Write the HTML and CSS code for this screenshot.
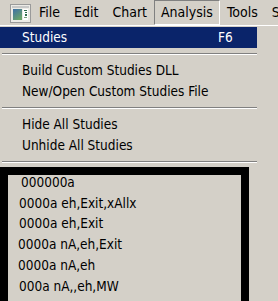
FILE: index.html
```html
<!DOCTYPE html>
<html lang="en">
<head>
    <meta charset="UTF-8">
    <title>Analysis menu</title>
    <link rel="stylesheet" href="styles.css">
</head>
<body>

    <div class="menubar">
        <span class="app-icon">
            <svg width="21" height="19" viewBox="0 0 21 19">
                <defs>
                    <linearGradient id="pane" x1="0" y1="0" x2="0.6" y2="1">
                        <stop offset="0" stop-color="#3d6fa8"/>
                        <stop offset="1" stop-color="#6aa46a"/>
                    </linearGradient>
                </defs>
                <rect x="0.5" y="0.5" width="20" height="18" fill="#ecebe6" stroke="#9a9a9a"/>
                <rect x="2" y="2" width="17" height="2" fill="#c8c8c8"/>
                <rect x="3" y="5" width="9" height="11" fill="url(#pane)"/>
                <rect x="13" y="5" width="5" height="11" fill="#ffffff"/>
                <rect x="14" y="6" width="3" height="1" fill="#2f6b4a"/>
                <rect x="15" y="8" width="2" height="1" fill="#2f6b4a"/>
                <rect x="15" y="10" width="2" height="2" fill="#2f6b4a"/>
                <rect x="14" y="13" width="3" height="1" fill="#7aa07a"/>
            </svg>
        </span>
        <span class="menu-item">File</span>
        <span class="menu-item">Edit</span>
        <span class="menu-item">Chart</span>
        <span class="menu-item pressed">Analysis</span>
        <span class="menu-item">Tools</span>
        <span class="menu-item">S</span>
    </div>

    <div class="dropdown">
        <div class="entry selected"><span>Studies</span><span class="key">F6</span></div>
        <div class="sep"></div>
        <div class="entry">Build Custom Studies DLL</div>
        <div class="entry">New/Open Custom Studies File</div>
        <div class="sep"></div>
        <div class="entry">Hide All Studies</div>
        <div class="entry">Unhide All Studies</div>
        <div class="sep"></div>
    </div>

    <div class="study-box">
        <div class="line l1">000000a</div>
        <div class="line">0000a eh,Exit,xAllx</div>
        <div class="line">0000a eh,Exit</div>
        <div class="line l4">0000a nA,eh,Exit</div>
        <div class="line l4">0000a nA,eh</div>
        <div class="line">000a nA,,eh,MW</div>
    </div>

</body>
</html>
```

FILE: styles.css
```css
* { margin: 0; padding: 0; box-sizing: border-box; }
body {
    background: #d4d0c8;
    font-family: "DejaVu Sans Condensed", "DejaVu Sans", sans-serif;
    font-stretch: condensed;
    font-size: 13.5px;
    color: #000;
    overflow: hidden;
}
.menubar {
    display: flex;
    align-items: center;
    height: 26px;
    padding-left: 10px;
    border-bottom: 1px solid #fff;
    white-space: nowrap;
    font-size: 14px;
}
.app-icon { display: flex; margin-right: 1px; margin-top: 1px; }
.menu-item {
    padding: 3px 6px 4px;
    border: 1px solid transparent;
    line-height: 16px;
}
.menu-item.pressed {
    border-color: #808080 #fff #fff #808080;
}
.dropdown {
    width: 257px;
    padding-top: 1px;
}
.entry {
    display: flex;
    justify-content: space-between;
    height: 21px;
    line-height: 21px;
    padding: 0 22px 0 22px;
}
.entry.selected { background: #0a246a; color: #fff; }
.key { width: 17px; }
.sep {
    margin: 5px 0 5px 2px;
    border-top: 1px solid #808080;
    border-bottom: 1px solid #fff;
}
.sep:last-child { margin-bottom: 4px; }
.study-box {
    width: 249px;
    height: 140px;
    border: 8px solid #000;
    border-bottom: none;
    padding: 0 0 0 11px;
}
.line { line-height: 20.7px; }
.line:first-child { margin-top: -3px; }
.line.l1 { padding-left: 2px; }
.line.l4 { margin-left: -1px; }
```
